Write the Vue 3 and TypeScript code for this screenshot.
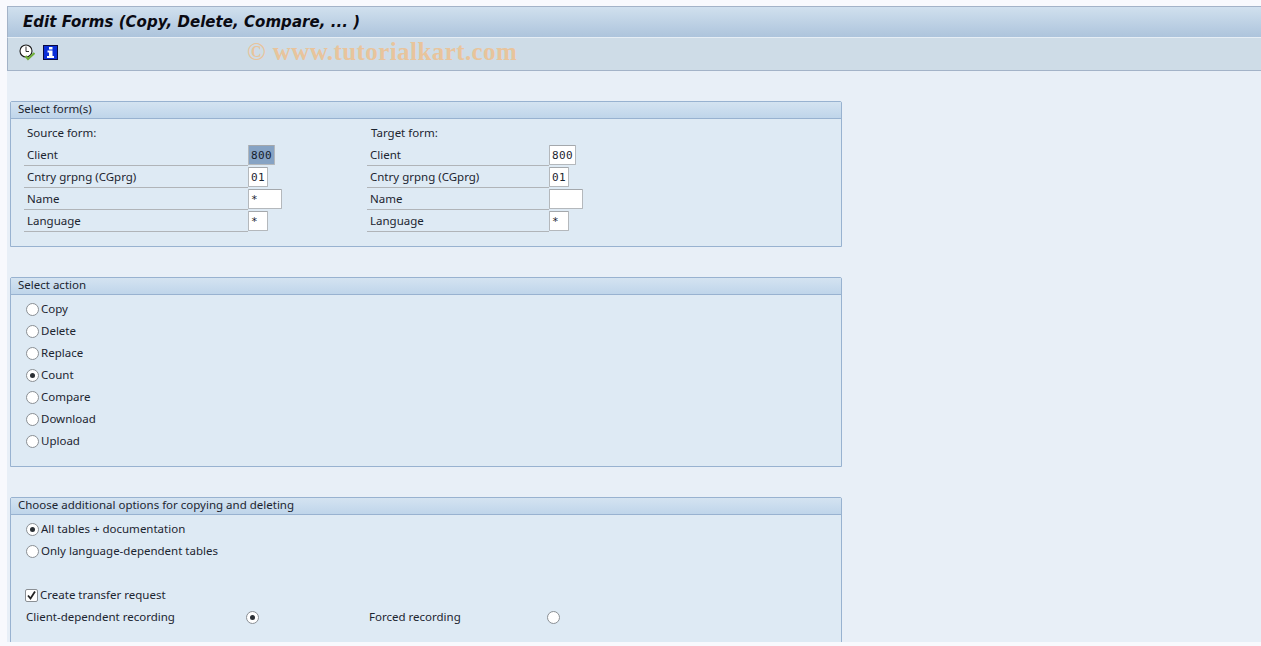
<script setup lang="ts">
interface FieldRow { label: string; value: string; width: number; selected?: boolean }
interface OptionRow { label: string; on: boolean }

const sourceRows: FieldRow[] = [
  { label: 'Client', value: '800', width: 27, selected: true },
  { label: 'Cntry grpng (CGprg)', value: '01', width: 20 },
  { label: 'Name', value: '*', width: 34 },
  { label: 'Language', value: '*', width: 20 },
]
const targetRows: FieldRow[] = [
  { label: 'Client', value: '800', width: 27 },
  { label: 'Cntry grpng (CGprg)', value: '01', width: 20 },
  { label: 'Name', value: '', width: 34 },
  { label: 'Language', value: '*', width: 20 },
]
const actions: OptionRow[] = [
  { label: 'Copy', on: false },
  { label: 'Delete', on: false },
  { label: 'Replace', on: false },
  { label: 'Count', on: true },
  { label: 'Compare', on: false },
  { label: 'Download', on: false },
  { label: 'Upload', on: false },
]
const tables: OptionRow[] = [
  { label: 'All tables + documentation', on: true },
  { label: 'Only language-dependent tables', on: false },
]
</script>

<template>
  <div class="page">
    <header class="titlebar"><h1>Edit Forms (Copy, Delete, Compare, ... )</h1></header>
    <div class="toolbar">
      <svg class="icon" width="16" height="17" viewBox="0 0 16 17">
        <circle cx="7" cy="7" r="6" fill="#fff" stroke="#1c1c1c" stroke-width="1.1" />
        <path d="M7 2.5V7.5H10" fill="none" stroke="#1c1c1c" stroke-width="0.9" />
        <path d="M6.5 12L9 15L15.5 9" fill="none" stroke="#6fae3a" stroke-width="2.2" />
      </svg>
      <svg class="icon info" width="15" height="15" viewBox="0 0 15 15">
        <rect x="0.5" y="0.5" width="14" height="14" fill="#0b2fd8" stroke="#0a0a40" />
        <rect x="6" y="2" width="3.5" height="2.5" fill="#fff" />
        <path d="M4.5 5.5H9.5V11H11V13H4V11H6V7.5H4.5Z" fill="#fff" />
      </svg>
      <span class="watermark">© www.tutorialkart.com</span>
    </div>

    <main class="content">
      <section class="panel">
        <div class="panel-head">Select form(s)</div>
        <div class="panel-body columns">
          <div class="col col-left">
            <div class="col-title">Source form:</div>
            <div v-for="r in sourceRows" :key="r.label" class="field-row">
              <label class="field-label">{{ r.label }}</label>
              <span class="input" :class="{ sel: r.selected }" :style="{ width: r.width + 'px' }">{{ r.value }}</span>
            </div>
          </div>
          <div class="col col-right">
            <div class="col-title target">Target form:</div>
            <div v-for="r in targetRows" :key="r.label" class="field-row">
              <label class="field-label">{{ r.label }}</label>
              <span class="input" :style="{ width: r.width + 'px' }">{{ r.value }}</span>
            </div>
          </div>
        </div>
      </section>

      <section class="panel">
        <div class="panel-head">Select action</div>
        <div class="panel-body">
          <div v-for="a in actions" :key="a.label" class="opt-row">
            <span class="radio" :class="{ on: a.on }"></span><span class="txt">{{ a.label }}</span>
          </div>
        </div>
      </section>

      <section class="panel last">
        <div class="panel-head">Choose additional options for copying and deleting</div>
        <div class="panel-body">
          <div v-for="a in tables" :key="a.label" class="opt-row">
            <span class="radio" :class="{ on: a.on }"></span><span class="txt">{{ a.label }}</span>
          </div>
          <div class="opt-row"></div>
          <div class="opt-row check-row">
            <span class="check">
              <svg width="11" height="11" viewBox="0 0 11 11"><path d="M2 5.5L4.5 8.5L9 1.5" fill="none" stroke="#222" stroke-width="1.8" /></svg>
            </span><span class="txt">Create transfer request</span>
          </div>
          <div class="opt-row rec-row">
            <span class="txt rec-label">Client-dependent recording</span>
            <span class="radio on"></span>
            <span class="txt rec-label second">Forced recording</span>
            <span class="radio"></span>
          </div>
          <div class="opt-row"></div>
        </div>
      </section>
    </main>
  </div>
</template>

<style>
html, body { margin: 0; background: #f8f9fd; }
</style>

<style scoped>
.page {
  width: 1261px;
  height: 646px;
  box-sizing: border-box;
  padding: 6px 0 4px 7px;
  display: flex;
  flex-direction: column;
  overflow: hidden;
  font-family: "Noto Sans", sans-serif;
  font-size: 11.5px;
  color: #1c2530;
}
.titlebar {
  height: 31px;
  flex: none;
  box-sizing: border-box;
  border-top: 1px solid #a3b3c8;
  border-left: 1px solid #a3b3c8;
  background: linear-gradient(#d0e0ee, #adc4dc);
  display: flex;
  align-items: center;
  padding-left: 15px;
}
h1 {
  margin: 0;
  font-family: "DejaVu Sans", sans-serif;
  font-size: 15px;
  font-weight: bold;
  font-style: italic;
  letter-spacing: 0.05px;
  color: #0a0a12;
}
.toolbar {
  height: 34px;
  flex: none;
  box-sizing: border-box;
  border-top: 1px solid #e6eef5;
  border-bottom: 1px solid #a3b3c8;
  border-left: 1px solid #a3b3c8;
  background: #cedce7;
  display: flex;
  align-items: center;
  padding: 0 0 4px 11px;
}
.icon { flex: none; }
.info { margin-left: 8px; }
.watermark {
  margin-left: 189px;
  font-family: "Liberation Serif", serif;
  font-weight: bold;
  font-size: 25px;
  letter-spacing: 0.42px;
  line-height: 26px;
  color: #e8c49c;
  white-space: nowrap;
}
.content {
  flex: 1;
  min-height: 0;
  overflow: hidden;
  background: #e8eff7;
  padding: 30px 0 0 3px;
}
.panel {
  width: 832px;
  box-sizing: border-box;
  border: 1px solid #98b2d0;
  border-radius: 2px 2px 0 0;
  background: #deeaf4;
  margin-bottom: 30px;
}
.panel-head {
  height: 17px;
  box-sizing: border-box;
  border-bottom: 1px solid #98b2d0;
  background: linear-gradient(#d4e3f1, #bfd5ea);
  padding-left: 7px;
  line-height: 14px;
}
.panel-body { padding: 3px 0 14px 0; }
.columns { display: flex; }
.col { display: flex; flex-direction: column; }
.col-left { width: 356px; padding-left: 13px; box-sizing: border-box; }
.col-title { height: 22px; line-height: 21px; padding-left: 3px; }
.col-title.target { padding-left: 4px; }
.field-row { height: 22px; display: flex; align-items: center; }
.field-label {
  width: 224px;
  height: 21px;
  line-height: 19px;
  box-sizing: border-box;
  padding-left: 3px;
  border-bottom: 1px solid #b0b4b8;
}
.col-right .field-label { width: 182px; }
.input {
  height: 20px;
  box-sizing: border-box;
  background: #fff;
  border: 1px solid #b4b8bc;
  border-top-color: #a4a8ac;
  font-family: "DejaVu Sans Mono", monospace;
  font-size: 11px;
  letter-spacing: 0.4px;
  line-height: 19px;
  padding-left: 2px;
  border-radius: 1px;
  overflow: hidden;
}
.sel { background: #86a3c4; color: #14202c; }
.opt-row {
  height: 22px;
  display: flex;
  align-items: center;
  padding-left: 15px;
  gap: 2px;
}
.txt { padding-bottom: 2px; }
.radio {
  width: 13px;
  height: 13px;
  flex: none;
  box-sizing: border-box;
  border: 1px solid #8a8f94;
  border-radius: 50%;
  background: #fff;
  display: inline-flex;
  align-items: center;
  justify-content: center;
}
.radio.on::after {
  content: "";
  width: 5px;
  height: 5px;
  border-radius: 50%;
  background: #2a2f34;
}
.check-row { padding-left: 14px; }
.check {
  width: 13px;
  height: 13px;
  box-sizing: border-box;
  flex: none;
  background: #fff;
  border: 1px solid #8a8f94;
  border-radius: 2px;
  display: inline-flex;
  align-items: center;
  justify-content: center;
}
.rec-row { gap: 0; }
.rec-label { width: 220px; }
.rec-label.second { width: 178px; margin-left: 110px; }
.last { margin-bottom: 0; }
</style>
